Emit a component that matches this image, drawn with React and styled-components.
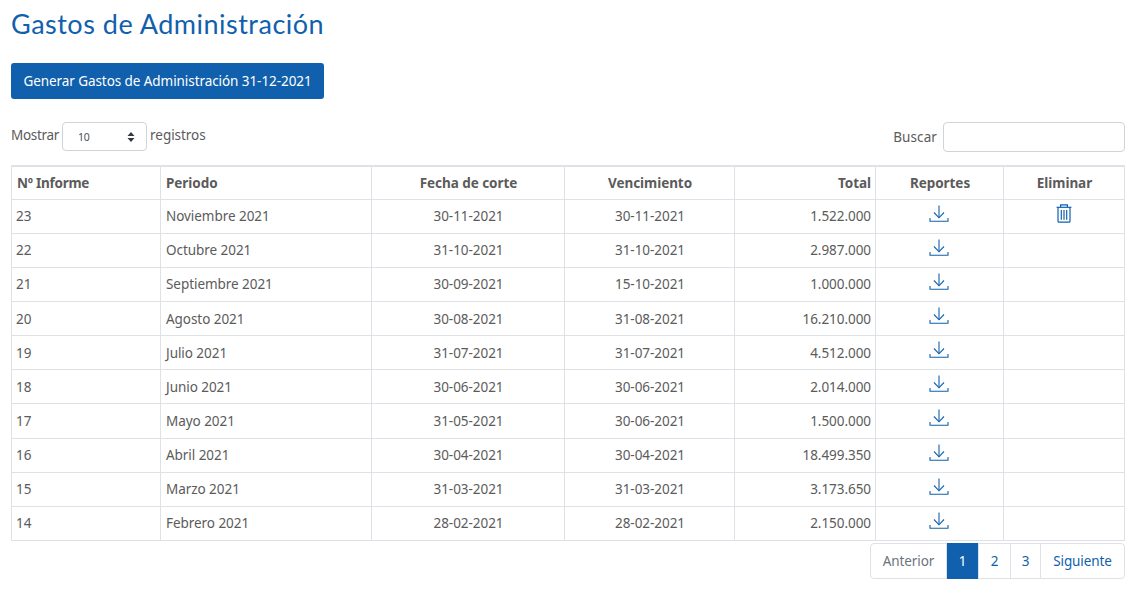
import styled, { createGlobalStyle } from "styled-components";

const rows = [
	["23", "Noviembre 2021", "30-11-2021", "30-11-2021", "1.522.000", true],
	["22", "Octubre 2021", "31-10-2021", "31-10-2021", "2.987.000"],
	["21", "Septiembre 2021", "30-09-2021", "15-10-2021", "1.000.000"],
	["20", "Agosto 2021", "30-08-2021", "31-08-2021", "16.210.000"],
	["19", "Julio 2021", "31-07-2021", "31-07-2021", "4.512.000"],
	["18", "Junio 2021", "30-06-2021", "30-06-2021", "2.014.000"],
	["17", "Mayo 2021", "31-05-2021", "30-06-2021", "1.500.000"],
	["16", "Abril 2021", "30-04-2021", "30-04-2021", "18.499.350"],
	["15", "Marzo 2021", "31-03-2021", "31-03-2021", "3.173.650"],
	["14", "Febrero 2021", "28-02-2021", "28-02-2021", "2.150.000"],
];

const DownloadIcon = () => (
	<DownloadSvg width="20" height="18" viewBox="0 0 20 18" fill="none" stroke="#1160ad" strokeWidth="1.1">
		<path d="M10 0.5V12.8" />
		<path d="M5 7.5L10 12.8L15 7.5" />
		<path d="M1 13V16.3H19V13" />
	</DownloadSvg>
);

const TrashIcon = () => (
	<TrashSvg width="16" height="19" viewBox="0 0 16 19" fill="none" stroke="#1160ad" strokeWidth="1.2">
		<path d="M0.6 3.3H15.4" />
		<path d="M4.6 3V0.9H11.4V3" />
		<path d="M2 3.3V17.2A1 1 0 0 0 3 18.2H13A1 1 0 0 0 14 17.2V3.3" />
		<path d="M5.3 6V15.8M8 6V15.8M10.7 6V15.8" />
	</TrashSvg>
);

export default function App() {
	return (
		<Page>
			<GlobalStyle />
			<Title>Gastos de Administración</Title>
			<PrimaryButton>Generar Gastos de Administración 31-12-2021</PrimaryButton>
			<Toolbar>
				<LengthLabel>
					Mostrar
					<SelectBox>
						<span>10</span>
						<Carets viewBox="0 0 8 12" width="8" height="12">
							<path d="M4 1L7.5 5H0.5Z M4 11L0.5 7H7.5Z" fill="#343a40" />
						</Carets>
					</SelectBox>
					<LengthSuffix>registros</LengthSuffix>
				</LengthLabel>
				<SearchLabel>
					Buscar
					<SearchInput />
				</SearchLabel>
			</Toolbar>
			<Table>
				<colgroup>
					<col width="149" />
					<col width="211" />
					<col width="193" />
					<col width="170" />
					<col width="141" />
					<col width="128" />
					<col width="121" />
				</colgroup>
				<thead>
					<HeadRow>
						<Th>Nº Informe</Th>
						<Th>Periodo</Th>
						<Th $align="center">Fecha de corte</Th>
						<Th $align="center">Vencimiento</Th>
						<Th $align="right">Total</Th>
						<Th $align="center">Reportes</Th>
						<Th $align="center">Eliminar</Th>
					</HeadRow>
				</thead>
				<tbody>
					{rows.map((r, i) => {
						const low = i >= 3 && i <= 6;
						return (
							<BodyRow key={r[0]} $tall={i === 6}>
								<Td $low={low}>{r[0]}</Td>
								<Td $low={low}>{r[1]}</Td>
								<Td $low={low} $align="center">{r[2]}</Td>
								<Td $low={low} $align="center">{r[3]}</Td>
								<Td $low={low} $align="right">{r[4]}</Td>
								<IconCell>
									<DownloadIcon />
								</IconCell>
								<IconCell>{r[5] && <TrashIcon />}</IconCell>
							</BodyRow>
						);
					})}
				</tbody>
			</Table>
			<PagerRow>
				<Pager>
					<PageItem $w={75} $muted>Anterior</PageItem>
					<PageItem $w={32} $active>1</PageItem>
					<PageItem $w={32}>2</PageItem>
					<PageItem $w={30}>3</PageItem>
					<PageItem $w={84}>Siguiente</PageItem>
				</Pager>
			</PagerRow>
		</Page>
	);
}

const GlobalStyle = createGlobalStyle`
	body {
		margin: 0;
		background: #fff;
		color: #5b5b5b;
		font-family: "Noto Sans", "Open Sans", sans-serif;
		font-size: 13.5px;
	}
`;

const Page = styled.div`
	width: 1136px;
	height: 596px;
	padding: 0 11px;
	box-sizing: border-box;
	overflow: hidden;
`;

const Title = styled.h1`
	margin: 0;
	padding-top: 8px;
	height: 63px;
	box-sizing: border-box;
	font-family: Lato, "Open Sans", sans-serif;
	font-weight: 400;
	font-size: 27px;
	line-height: 32px;
	letter-spacing: 0.5px;
	color: #1160ad;
`;

const PrimaryButton = styled.button`
	display: block;
	width: 313px;
	height: 36px;
	padding: 0;
	border: 0;
	border-radius: 3px;
	background: #1160ad;
	color: #fff;
	font: inherit;
	letter-spacing: -0.07px;
`;

const Toolbar = styled.div`
	display: flex;
	justify-content: space-between;
	align-items: flex-start;
	margin-top: 22px;
	height: 44px;
`;

const LengthLabel = styled.label`
	display: flex;
	align-items: center;
	gap: 3px;
	height: 28px;
	letter-spacing: -0.3px;
`;

const LengthSuffix = styled.span`
	letter-spacing: -0.05px;
`;

const SelectBox = styled.div`
	display: flex;
	align-items: center;
	justify-content: space-between;
	width: 85px;
	height: 29px;
	margin-top: 3px;
	padding: 0 11px 0 15px;
	box-sizing: border-box;
	border: 1px solid #ced4da;
	border-radius: 4px;
	font-size: 10.5px;
	color: #495057;
`;

const Carets = styled.svg`
	display: block;
`;

const SearchLabel = styled.label`
	display: flex;
	align-items: center;
	gap: 6px;
	height: 30px;
	margin-top: 1px;
	letter-spacing: 0.1px;
`;

const SearchInput = styled.input`
	width: 182px;
	height: 30px;
	padding: 0;
	box-sizing: border-box;
	border: 1px solid #ced4da;
	border-radius: 4px;
	background: #fff;
`;

const Table = styled.table`
	width: 1114px;
	table-layout: fixed;
	border-collapse: collapse;
	border: 1px solid #dee2e6;
`;

const HeadRow = styled.tr`
	height: 33px;
`;

const BodyRow = styled.tr`
	height: ${(p) => (p.$tall ? "35px" : "34px")};
`;

const Th = styled.th`
	padding: 0 4px 0 5px;
	border: 1px solid #dee2e6;
	border-top-width: 2px;
	text-align: ${(p) => p.$align || "left"};
	font-weight: 700;
	letter-spacing: -0.05px;
	color: #5b5b5b;
	&:first-child {
		letter-spacing: -0.25px;
	}
`;

const Td = styled.td`
	padding: ${(p) => (p.$low ? "1px 4px 0 5px" : "0 4px 1px 5px")};
	border: 1px solid #dee2e6;
	text-align: ${(p) => p.$align || "left"};
	letter-spacing: -0.05px;
	&:first-child {
		padding-left: 4px;
	}
`;

const IconCell = styled.td`
	padding: 5px 0 0;
	border: 1px solid #dee2e6;
	text-align: center;
	vertical-align: top;
	line-height: 0;
`;

const DownloadSvg = styled.svg`
	margin-right: 1px;
`;

const TrashSvg = styled.svg`
	margin-top: -1px;
`;

const PagerRow = styled.div`
	display: flex;
	justify-content: flex-end;
	margin-top: 2px;
`;

const Pager = styled.div`
	display: flex;
	height: 36px;
	border: 1px solid #dee2e6;
	border-radius: 4px;
	box-sizing: border-box;
`;

const PageItem = styled.div`
	display: flex;
	align-items: center;
	justify-content: center;
	box-sizing: border-box;
	width: ${(p) => p.$w}px;
	margin: ${(p) => (p.$active ? "-1px 0" : "0")};
	letter-spacing: -0.1px;
	color: ${(p) => (p.$active ? "#fff" : p.$muted ? "#6c757d" : "#1160ad")};
	background: ${(p) => (p.$active ? "#1160ad" : "transparent")};
	& + & {
		border-left: ${(p) => (p.$active ? "0" : "1px solid #dee2e6")};
	}
`;
